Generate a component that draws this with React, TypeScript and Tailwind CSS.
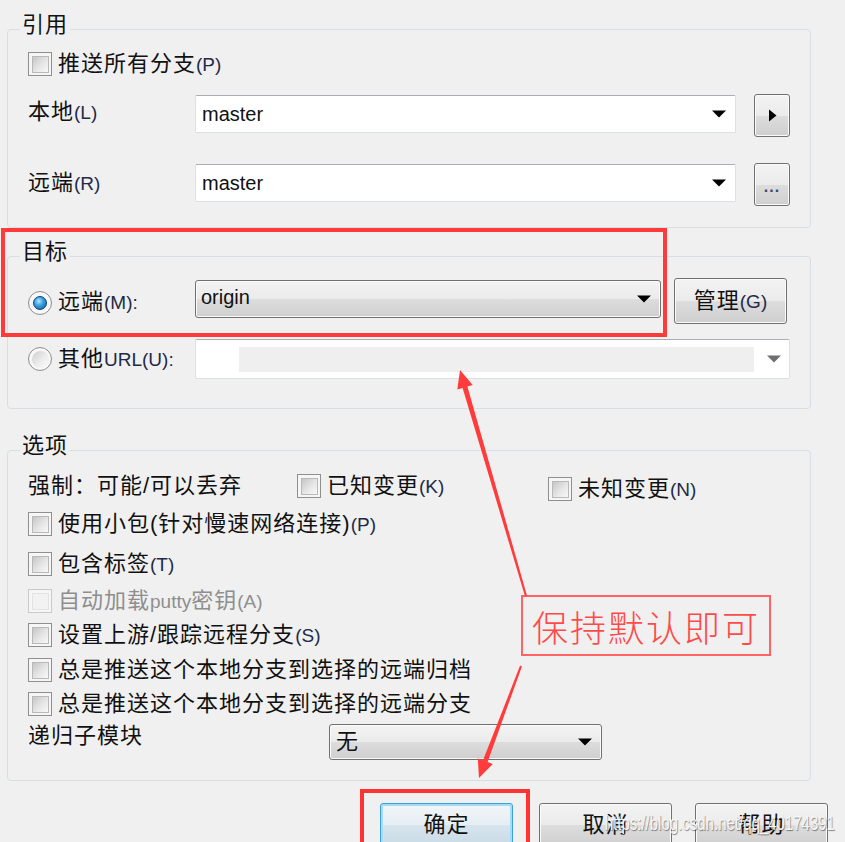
import React from "react";

type Kids = { children?: React.ReactNode };

const face =
  "flex items-center rounded-[3px] border border-[#707070] bg-[linear-gradient(#f3f3f3_0%,#ebebeb_50%,#dddddd_50%,#cfcfcf_100%)] shadow-[inset_0_0_0_1px_#fbfbfb]";
const btnFace = `${face} justify-center`;

const editBox =
  "flex items-center rounded-[2px] border border-[#dbdfe6] border-t-[#abadb3] bg-white";

function DownTri({ color = "#000" }: { color?: string }) {
  return (
    <svg width="14" height="8" viewBox="0 0 14 8" className="shrink-0">
      <path d="M0 0.5H14L7 7.5Z" fill={color} />
    </svg>
  );
}

function Zh({ text, mn, tail = "", dim }: { text: string; mn?: string; tail?: string; dim?: boolean }) {
  return (
    <span
      className={`whitespace-nowrap text-[22px] leading-[24px] tracking-[1px] ${dim ? "text-[#8e8e8e]" : "text-[#111]"}`}
    >
      {text}
      {mn && (
        <span className={`text-[19px] tracking-normal ${dim ? "text-[#8e8e8e]" : "text-[#1f2a48]"}`}>
          ({mn}){tail}
        </span>
      )}
    </span>
  );
}

function CheckBox({ dim }: { dim?: boolean }) {
  return (
    <span
      className={`flex h-[24px] w-[24px] shrink-0 items-center justify-center border bg-[#f6f6f6] ${dim ? "border-[#c9c9c9]" : "border-[#8e8f8f]"}`}
    >
      <span
        className={`h-[17px] w-[17px] border ${dim ? "border-[#e2e2e2] bg-[#f2f2f2]" : "border-[#b9b9b9] bg-[linear-gradient(135deg,#c6c6c6_0%,#e6e6e6_55%,#f8f8f8_100%)]"}`}
      />
    </span>
  );
}

function Radio({ checked }: { checked?: boolean }) {
  return (
    <span className="flex h-[24px] w-[24px] shrink-0 items-center justify-center rounded-full border border-[#8e8f8f] bg-[#f7f7f7]">
      {checked ? (
        <span className="h-[14px] w-[14px] rounded-full border border-[#0d3f6c] bg-[radial-gradient(circle_at_40%_35%,#b8e8ff_0%,#3aa2e4_40%,#0c5792_100%)]" />
      ) : (
        <span className="h-[17px] w-[17px] rounded-full bg-[linear-gradient(135deg,#cfcfcf_0%,#ececec_55%,#fbfbfb_100%)]" />
      )}
    </span>
  );
}

function Group({ title, className = "", bodyClass = "", children }: Kids & { title: string; className?: string; bodyClass?: string }) {
  return (
    <fieldset className={`w-[804px] rounded-[4px] border border-[#d5dfe5] ${className}`}>
      <legend className="ml-[12px] px-[2px] pb-[8px] text-[22px] leading-[28px] tracking-[1px] text-[#111]">
        {title}
      </legend>
      <div className={`pl-[20px] ${bodyClass}`}>{children}</div>
    </fieldset>
  );
}

function CheckRow({ className = "", dim, children }: Kids & { className?: string; dim?: boolean }) {
  return (
    <div className={`flex h-[24px] items-center gap-[6px] ${className}`}>
      <CheckBox dim={dim} />
      {children}
    </div>
  );
}

function EditCombo({ value }: { value: string }) {
  return (
    <div className={`${editBox} mt-[1px] h-[38px] w-[541px] justify-between pl-[6px] pr-[9px]`}>
      <span className="text-[20px] text-[#111]">{value}</span>
      <DownTri />
    </div>
  );
}

export default function App() {
  return (
    <div className="relative h-[842px] w-[845px] overflow-hidden bg-[#f0f0f0] font-['Liberation_Sans','Noto_Sans_CJK_SC',sans-serif] text-[#111]">
      <div className="pl-[7px] pt-[11px]">
        {/* 引用 */}
        <Group title="引用" bodyClass="pt-[5px] pb-[21px]">
          <CheckRow>
            <Zh text="推送所有分支" mn="P" />
          </CheckRow>
          <div className="mt-[18px] flex items-start">
            <span className="mb-[6px] w-[167px] self-center">
              <Zh text="本地" mn="L" />
            </span>
            <EditCombo value="master" />
            <div className={`${btnFace} ml-[18px] h-[43px] w-[36px]`}>
              <svg width="9" height="13" viewBox="0 0 9 13">
                <path d="M1 0.5V12.5L8.5 6.5Z" fill="#000" />
              </svg>
            </div>
          </div>
          <div className="mt-[26px] flex items-start">
            <span className="mb-[2px] w-[167px] self-center">
              <Zh text="远端" mn="R" />
            </span>
            <EditCombo value="master" />
            <div className={`${face} ml-[18px] h-[43px] w-[36px] items-end justify-center pb-[10px]`}>
              <span className="text-[16px] font-bold leading-none tracking-[1px] text-[#3a4d6b]">...</span>
            </div>
          </div>
        </Group>

        {/* 目标 */}
        <Group title="目标" className="mt-[10px]" bodyClass="pt-[4px] pb-[29px]">
          <div className="flex h-[46px] items-center">
            <div className="flex w-[167px] items-center gap-[6px] pt-[3px]">
              <Radio checked />
              <Zh text="远端" mn="M" tail=":" />
            </div>
            <div className={`${face} mb-[4px] h-[38px] w-[466px] justify-between pl-[5px] pr-[9px]`}>
              <span className="pb-[4px] text-[20px] text-[#111]">origin</span>
              <DownTri />
            </div>
            <div className={`${btnFace} ml-[13px] h-[46px] w-[113px]`}>
              <Zh text="管理" mn="G" />
            </div>
          </div>
          <div className="mt-[15px] flex h-[40px] items-center">
            <div className="flex w-[167px] items-center gap-[6px]">
              <Radio />
              <span className="whitespace-nowrap text-[22px] leading-[24px] tracking-[1px]">
                其他<span className="text-[19px] tracking-normal text-[#1f2a48]">URL(U):</span>
              </span>
            </div>
            <div className={`${editBox} h-[40px] w-[595px] pl-[43px] pr-[8px]`}>
              <span className="h-[25px] w-[515px] bg-[#efefef]" />
              <span className="ml-auto">
                <DownTri color="#6e6e6e" />
              </span>
            </div>
          </div>
        </Group>

        {/* 选项 */}
        <Group title="选项" className="mt-[23px]" bodyClass="pt-[6px] pb-[20px]">
          <div className="flex h-[24px] items-center">
            <span className="w-[269px] whitespace-nowrap text-[22px] leading-[24px] tracking-[1px]">
              强制：可能/可以丢弃
            </span>
            <CheckRow className="w-[251px]">
              <Zh text="已知变更" mn="K" />
            </CheckRow>
            <CheckRow className="mt-[6px]">
              <Zh text="未知变更" mn="N" />
            </CheckRow>
          </div>
          <CheckRow className="mt-[14px]">
            <Zh text="使用小包(针对慢速网络连接)" mn="P" />
          </CheckRow>
          <CheckRow className="mt-[16px]">
            <Zh text="包含标签" mn="T" />
          </CheckRow>
          <CheckRow className="mt-[13px]" dim>
            <span className="whitespace-nowrap text-[22px] leading-[24px] tracking-[1px] text-[#8e8e8e]">
              自动加载<span className="text-[19px] tracking-normal">putty</span>密钥
              <span className="text-[19px] tracking-normal">(A)</span>
            </span>
          </CheckRow>
          <CheckRow className="mt-[10px]">
            <Zh text="设置上游/跟踪远程分支" mn="S" />
          </CheckRow>
          <CheckRow className="mt-[11px]">
            <Zh text="总是推送这个本地分支到选择的远端归档" />
          </CheckRow>
          <CheckRow className="mt-[10px]">
            <Zh text="总是推送这个本地分支到选择的远端分支" />
          </CheckRow>
          <div className="mt-[8px] flex items-start">
            <span className="w-[301px]">
              <Zh text="递归子模块" />
            </span>
            <div className={`${face} h-[36px] w-[273px] justify-between pl-[6px] pr-[9px]`}>
              <span className="text-[22px] leading-[24px]">无</span>
              <DownTri />
            </div>
          </div>
        </Group>

        {/* dialog buttons */}
        <div className="mt-[22px] flex">
          <div className="ml-[373px] flex h-[44px] w-[133px] items-center justify-center rounded-[3px] border border-[#3c9fd9] bg-[linear-gradient(#f1f5f8_0%,#e6eef3_50%,#d6e4ed_50%,#c9dbe7_100%)] shadow-[inset_0_0_0_2px_#a6dcf6]">
            <Zh text="确定" />
          </div>
          <div className={`${btnFace} ml-[26px] h-[44px] w-[133px]`}>
            <Zh text="取消" />
          </div>
          <div className={`${btnFace} ml-[23px] h-[44px] w-[133px]`}>
            <Zh text="帮助" />
          </div>
        </div>
      </div>

      {/* annotations */}
      <div className="pointer-events-none absolute left-[1px] top-[228px] h-[109px] w-[666px] border-[4px] border-[#ff3a3a]" />
      <div className="pointer-events-none absolute left-[360px] top-[789px] h-[70px] w-[170px] border-[4px] border-[#ff3333]" />
      <div className="pointer-events-none absolute left-[521px] top-[595px] flex h-[61px] w-[250px] items-center justify-center border-[2px] border-[#ff6464] bg-[#f0f0f0]">
        <span className="font-['Noto_Sans_CJK_SC',sans-serif] text-[36px] font-light leading-[44px] tracking-[2px] text-[#ff4a4a]">
          保持默认即可
        </span>
      </div>
      <svg className="pointer-events-none absolute left-0 top-0" width="845" height="842" viewBox="0 0 845 842">
        <polygon
          points="460,370 472.7,385.1 467.4,386.6 527,595.7 525,596.3 462.6,388 457.3,389.5"
          fill="#ff3b3b"
        />
        <polygon
          points="479,778 492.8,764 487.6,762.1 521.9,666.4 520.1,665.6 483,760.3 477.8,758.4"
          fill="#ff3b3b"
        />
      </svg>
      <span className="pointer-events-none absolute right-[10px] top-[808px] origin-right scale-x-[0.75] whitespace-nowrap text-[20px] text-[#f6f6f6] [text-shadow:1px_1px_1px_rgba(0,0,0,0.45)]">
        https://blog.csdn.net/qq_40174391
      </span>
    </div>
  );
}
